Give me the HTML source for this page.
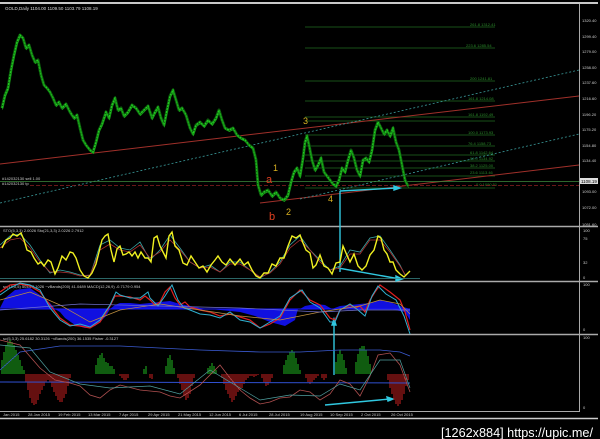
<!DOCTYPE html>
<html><head><meta charset="utf-8"><style>
html,body{margin:0;padding:0;background:#000;width:600px;height:439px;overflow:hidden}
svg{display:block}
text{font-family:"Liberation Sans",sans-serif}
</style></head><body>
<svg width="600" height="439" viewBox="0 0 600 439" xmlns="http://www.w3.org/2000/svg">
<defs>
<polyline id="pr" points="2,108 5,95 8,88 11,70 14,55 17,42 20,35 23,38 26,48 29,45 32,55 35,62 38,60 41,75 44,85 47,88 50,92 53,98 56,105 59,102 62,108 66,104 70,112 74,118 77,115 80,128 83,140 86,145 90,150 93,152 96,142 99,130 102,124 106,112 109,118 112,105 115,98 118,110 121,108 124,116 128,112 132,105 136,108 140,114 144,110 148,106 152,118 155,112 158,107 161,118 164,125 167,110 170,96 173,90 176,100 179,110 182,108 186,115 190,128 193,134 196,125 200,122 204,126 208,120 212,124 216,118 219,110 222,120 225,128 229,130 233,128 237,135 241,138 245,140 249,145 253,148 256,160 258,185 261,195 264,192 268,190 272,196 276,192 280,198 284,200 288,195 291,182 294,172 297,168 300,176 303,158 305,142 307,136 309,145 312,160 315,170 318,165 321,158 324,172 327,176 330,180 333,184 336,186 339,180 342,168 345,172 348,160 351,150 354,158 357,170 360,176 363,160 366,158 369,162 372,150 375,130 378,122 381,128 384,134 387,130 390,136 393,128 396,142 399,150 402,165 405,180 408,186"/>
</defs>
<rect width="600" height="439" fill="#000"/>
<line x1="0" y1="3" x2="598" y2="3" stroke="#c8c8c8" stroke-width="2"/>
<line x1="0" y1="226.5" x2="598" y2="226.5" stroke="#aaa" stroke-width="1.5"/>
<line x1="0" y1="281.5" x2="598" y2="281.5" stroke="#aaa" stroke-width="1.5"/>
<line x1="0" y1="334.5" x2="598" y2="334.5" stroke="#aaa" stroke-width="1.5"/>
<line x1="0" y1="411.5" x2="580" y2="411.5" stroke="#aaa" stroke-width="1"/>
<line x1="0" y1="418.5" x2="598" y2="418.5" stroke="#ccc" stroke-width="1.5"/>
<line x1="579.5" y1="4" x2="579.5" y2="412" stroke="#aaa" stroke-width="1"/>
<text x="5" y="10" fill="#ddd" font-size="4.5">GOLD,Daily  1104.00 1109.50 1103.79 1108.19</text>

<g stroke="#1f6a1f" stroke-width="0.8">
<line x1="305" y1="27" x2="495" y2="27"/><line x1="305" y1="48" x2="495" y2="48"/>
<line x1="305" y1="81" x2="495" y2="81"/><line x1="305" y1="101" x2="495" y2="101"/>
<line x1="305" y1="117" x2="495" y2="117"/><line x1="305" y1="121" x2="495" y2="121"/>
<line x1="305" y1="135" x2="495" y2="135"/><line x1="305" y1="146" x2="495" y2="146"/>
<line x1="305" y1="155" x2="495" y2="155"/><line x1="305" y1="161" x2="495" y2="161"/>
<line x1="305" y1="168" x2="495" y2="168"/><line x1="305" y1="176" x2="495" y2="176"/>
<line x1="305" y1="188" x2="495" y2="188"/>
</g>
<g fill="#2a8a2a" font-size="4">
<text x="470" y="26">261.8 1312.41</text><text x="466" y="47">223.6 1285.54</text>
<text x="470" y="80">200 1241.81</text><text x="468" y="100">161.8 1214.08</text>
<text x="468" y="116">161.8 1192.49</text><text x="468" y="134">100.0 1173.93</text>
<text x="468" y="145">76.4 1158.73</text><text x="470" y="154">61.8 1142.64</text>
<text x="470" y="160">50.0 1134.92</text><text x="470" y="167">38.2 1125.00</text>
<text x="470" y="174">23.6 1113.46</text><text x="476" y="186">0.0 1090.51</text>
</g>
<line x1="0" y1="164" x2="579" y2="96" stroke="#a0302a" stroke-width="1"/>
<line x1="260" y1="203" x2="579" y2="165" stroke="#a0302a" stroke-width="1"/>
<line x1="0" y1="203" x2="579" y2="70" stroke="#3a9a9a" stroke-width="0.8" stroke-dasharray="2,2"/>
<line x1="300" y1="199" x2="579" y2="134" stroke="#3a9a9a" stroke-width="0.8" stroke-dasharray="2,2"/>
<line x1="0" y1="181.5" x2="579" y2="181.5" stroke="#3c8a3c" stroke-width="0.8"/>
<line x1="30" y1="185.5" x2="579" y2="185.5" stroke="#8a2020" stroke-width="0.8" stroke-dasharray="4,2"/>
<text x="2" y="180" fill="#ccc" font-size="4">#142032130 sell 1.00</text>
<text x="2" y="185" fill="#ccc" font-size="4">#142032130 tp</text>
<rect x="580" y="178" width="18" height="6" fill="#ddd"/>
<text x="581" y="183" fill="#000" font-size="4.5">1108.19</text>
<use href="#pr" fill="none" stroke="#0c5c0c" stroke-width="3" stroke-linejoin="round"/>
<use href="#pr" fill="none" stroke="#22d022" stroke-width="1.3" stroke-dasharray="2,1"/>
<use href="#pr" fill="none" stroke="#18a018" stroke-width="0.8" transform="translate(0.5,1.5)"/>
<text x="266" y="183" fill="#e04020" font-size="11">a</text>
<text x="273" y="171" fill="#d8b020" font-size="9">1</text>
<text x="269" y="220" fill="#e04020" font-size="11">b</text>
<text x="286" y="215" fill="#d8b020" font-size="9">2</text>
<text x="303" y="124" fill="#d8b020" font-size="9">3</text>
<text x="328" y="202" fill="#d8b020" font-size="9">4</text>
<g stroke="#30c8e0" stroke-width="1.4" fill="#30c8e0">
<line x1="340" y1="191" x2="397" y2="188"/><polygon points="400,188 394,186 394,190"/>
<line x1="340" y1="191" x2="340" y2="272"/>
<line x1="338" y1="268" x2="400" y2="279"/><polygon points="402,279 396,276 396,281"/>
<line x1="334" y1="375" x2="334" y2="322"/><polygon points="334,319 332,325 336,325"/>
<line x1="325" y1="405" x2="390" y2="399"/><polygon points="393,399 387,397 388,401"/>
</g>
<g fill="#ccc" font-size="4">
<text x="582" y="22">1320.40</text><text x="582" y="38">1299.40</text><text x="582" y="53">1279.00</text>
<text x="582" y="69">1258.00</text><text x="582" y="84">1237.60</text><text x="582" y="100">1216.60</text>
<text x="582" y="116">1196.20</text><text x="582" y="131">1175.20</text><text x="582" y="147">1154.80</text>
<text x="582" y="162">1134.40</text><text x="582" y="193">1093.00</text><text x="582" y="209">1072.00</text>
<text x="582" y="226">1051.60</text>
<text x="583" y="232">100</text><text x="583" y="240">75</text><text x="583" y="264">32</text><text x="583" y="279">0</text>
<text x="583" y="286">100</text><text x="583" y="331">0</text><text x="583" y="339">100</text><text x="583" y="409">0</text>
</g>
<text x="3" y="232" fill="#ccc" font-size="4">STO(5,3,3) 2.0026  Sto(21,3,3) 2.0226 2.7912</text>
<line x1="0" y1="278.5" x2="420" y2="278.5" stroke="#3a8a8a" stroke-width="0.8"/>
<polyline fill="none" stroke="#3aa6a6" stroke-width="0.8" points="0,245 10,236 20,234 30,245 40,260 50,273 60,270 70,272 80,275 90,276 100,245 110,240 120,248 130,250 140,242 150,260 160,250 170,235 180,248 190,262 200,268 210,265 220,272 230,262 240,262 250,270 260,278 270,272 280,262 290,245 300,236 310,250 320,260 330,270 340,266 350,250 360,252 370,238 380,236 390,250 400,265 405,275"/>
<polyline fill="none" stroke="#b03030" stroke-width="0.8" points="0,248 10,240 20,238 30,248 40,262 50,272 60,272 70,273 80,276 90,275 100,250 110,244 120,250 130,252 140,245 150,258 160,252 170,240 180,250 190,262 200,268 210,267 220,272 230,264 240,264 250,270 260,277 270,273 280,264 290,248 300,240 310,250 320,262 330,270 340,268 350,254 360,254 370,240 380,240 390,252 400,266 406,276"/>
<polyline fill="none" stroke="#f0f020" stroke-width="1.4" points="2,248 6,240 10,238 13,234 17,236 21,233 24,240 27,250 31,252 34,258 38,264 41,262 44,266 48,260 51,262 55,274 58,268 62,256 66,260 70,252 73,253 76,258 80,270 84,276 88,278 92,273 96,264 99,252 102,240 105,236 108,234 111,250 114,262 117,249 120,246 123,255 126,254 129,252 132,256 135,252 138,258 141,252 145,258 148,258 151,262 154,238 157,236 160,246 163,252 166,258 169,236 172,232 175,246 179,250 183,263 187,265 191,256 195,262 199,268 203,266 207,272 211,265 215,260 218,256 222,262 226,265 230,259 235,265 240,259 244,265 248,262 252,270 256,276 260,278 264,273 268,273 272,264 276,266 280,258 284,258 288,246 292,236 296,238 300,235 303,243 306,250 310,253 313,268 316,265 320,255 324,266 328,268 332,274 336,263 340,262 343,246 346,253 350,262 354,254 358,266 362,270 366,266 370,255 374,250 378,236 381,238 384,250 387,254 390,262 393,262 396,270 400,274 404,277 407,274 410,271"/>
<text x="3" y="288" fill="#ccc" font-size="4">sc(14,0,5)  5044 3.1026  ~vBands(200) 41.0489  MACD(12,26,9) -0.7179 0.954</text>
<path d="M0,308 L5,298 L15,290 L30,288 L40,295 L50,303 L55,309 L60,312 L65,318 L75,325 L85,328 L95,326 L100,322 L106,316 L110,309 Z" fill="#1010e0"/>
<path d="M110,309 L115,305 L120,303 L130,303 L140,304 L150,303 L160,302 L170,301 L180,304 L190,306 L200,308 L210,309 L220,310 L240,312 L255,316 L270,322 L285,326 L295,320 L298,309 Z" fill="#1010e0"/>
<path d="M300,309 L305,306 L315,304 L325,305 L332,309 L340,306 L350,305 L360,304 L370,303 L380,300 L390,302 L400,306 L410,309 L410,320 L405,312 L390,309 Z" fill="#1010e0"/>
<line x1="0" y1="309" x2="410" y2="309" stroke="#1818ff" stroke-width="1"/>
<polyline fill="none" stroke="#e02020" stroke-width="1.2" points="0,292 10,285 20,284 30,286 40,292 50,305 60,318 70,325 80,326 90,328 100,322 110,306 115,296 120,296 130,297 140,300 145,296 150,300 155,305 160,302 165,292 170,287 175,298 180,305 185,302 190,307 200,310 210,312 220,316 230,314 240,317 250,320 260,328 270,324 280,318 290,300 300,290 310,300 320,305 330,318 335,320 340,310 350,305 355,308 360,306 365,312 370,300 375,292 380,285 390,292 400,300 405,312 410,330"/>
<polyline fill="none" stroke="#30b0d0" stroke-width="1" points="0,295 10,288 20,283 30,285 40,290 50,308 60,320 70,326 80,324 90,327 100,320 110,305 116,292 120,295 130,298 140,298 148,292 150,298 158,306 165,296 172,285 178,300 184,308 190,310 200,314 210,315 220,318 230,312 240,320 250,322 260,328 270,322 280,316 290,298 302,290 310,302 320,308 330,322 335,322 340,310 350,304 358,310 365,316 372,296 378,286 386,294 396,300 404,316 410,334"/>
<polyline fill="none" stroke="#c09040" stroke-width="0.7" points="0,300 30,292 60,305 90,322 120,310 160,304 200,310 240,316 280,320 320,312 360,306 380,300 400,304 410,314"/>
<polyline fill="none" stroke="#7070d0" stroke-width="0.7" points="0,310 80,304 160,306 240,308 320,312 360,310 410,310"/>
<text x="3" y="340" fill="#ccc" font-size="4">sc(5,3,3) 25.6182 30.3126  ~vBands(200) 36.1535  Fisher -0.3127</text>
<g stroke-width="1.2">
<path d="M2,374 V360 M4,374 V352 M6,374 V345 M8,374 V342 M10,374 V340 M12,374 V342 M14,374 V345 M16,374 V350 M18,374 V355 M20,374 V360 M22,374 V366 M24,374 V370 M96,374 V365 M98,374 V358 M100,374 V355 M102,374 V353 M104,374 V358 M106,374 V362 M108,374 V363 M110,374 V366 M112,374 V366 M114,374 V369 M144,374 V369 M146,374 V366 M166,374 V366 M168,374 V358 M170,374 V355 M172,374 V360 M174,374 V368 M208,374 V368 M210,374 V366 M212,374 V363 M214,374 V366 M216,374 V370 M284,374 V365 M286,374 V360 M288,374 V355 M290,374 V352 M292,374 V350 M294,374 V352 M296,374 V358 M298,374 V364 M300,374 V370 M336,374 V362 M338,374 V354 M340,374 V350 M342,374 V354 M344,374 V360 M346,374 V368 M356,374 V362 M358,374 V354 M360,374 V348 M362,374 V346 M364,374 V346 M366,374 V350 M368,374 V356 M370,374 V364" stroke="#1a9a1a"/>
<path d="M26,374 V382 M28,374 V390 M30,374 V398 M32,374 V403 M34,374 V405 M36,374 V404 M38,374 V400 M40,374 V394 M42,374 V390 M44,374 V386 M46,374 V382 M48,374 V380 M50,374 V382 M52,374 V387 M54,374 V392 M56,374 V396 M58,374 V400 M60,374 V402 M62,374 V402 M64,374 V398 M66,374 V394 M68,374 V386 M70,374 V378 M120,374 V376 M122,374 V378 M124,374 V380 M126,374 V380 M128,374 V378 M150,374 V378 M152,374 V379 M178,374 V378 M180,374 V384 M182,374 V390 M184,374 V396 M186,374 V400 M188,374 V398 M190,374 V394 M192,374 V386 M194,374 V378 M222,374 V378 M224,374 V384 M226,374 V390 M228,374 V394 M230,374 V398 M232,374 V402 M234,374 V400 M236,374 V396 M238,374 V392 M240,374 V390 M242,374 V388 M244,374 V384 M246,374 V380 M248,374 V378 M250,374 V376 M252,374 V376 M254,374 V377 M256,374 V376 M258,374 V375 M262,374 V378 M264,374 V382 M266,374 V386 M268,374 V385 M270,374 V382 M272,374 V378 M306,374 V378 M308,374 V382 M310,374 V384 M312,374 V382 M314,374 V380 M316,374 V378 M318,374 V376 M322,374 V378 M324,374 V380 M326,374 V378 M388,374 V380 M390,374 V388 M392,374 V394 M394,374 V400 M396,374 V404 M398,374 V406 M400,374 V404 M402,374 V400 M404,374 V394 M406,374 V386 M408,374 V380" stroke="#a81c1c"/>
</g>
<line x1="0" y1="382" x2="410" y2="383" stroke="#3050d0" stroke-width="1"/>
<polyline fill="none" stroke="#3a5ad0" stroke-width="0.8" points="0,370 20,352 60,346 120,346 200,350 260,352 300,352 340,350 380,350 400,352 410,356"/>
<polyline fill="none" stroke="#b05050" stroke-width="0.8" points="0,340 20,345 40,368 55,380 70,383 80,386 90,395 100,398 110,390 120,385 140,390 160,392 170,396 180,398 200,385 220,365 230,378 240,390 250,398 260,404 270,402 280,398 290,397 300,390 310,392 320,400 330,394 340,380 350,384 360,396 370,376 378,355 390,353 400,365 410,392"/>
<polyline fill="none" stroke="#50a0a0" stroke-width="0.7" points="0,345 30,348 50,372 80,384 110,388 150,386 180,394 210,370 230,382 260,400 290,395 320,396 340,384 360,390 380,360 400,360 410,388"/>
<g fill="#ccc" font-size="4">
<text x="3" y="416">Jan 2015</text><text x="28" y="416">28 Jan 2015</text><text x="58" y="416">19 Feb 2015</text>
<text x="88" y="416">13 Mar 2015</text><text x="119" y="416">7 Apr 2015</text><text x="148" y="416">29 Apr 2015</text>
<text x="178" y="416">21 May 2015</text><text x="209" y="416">12 Jun 2015</text><text x="239" y="416">6 Jul 2015</text>
<text x="269" y="416">28 Jul 2015</text><text x="300" y="416">19 Aug 2015</text><text x="330" y="416">10 Sep 2015</text>
<text x="361" y="416">2 Oct 2015</text><text x="391" y="416">26 Oct 2015</text>
</g>
<text x="441" y="437" fill="#fff" font-size="13" font-family="Liberation Mono, monospace" textLength="152" lengthAdjust="spacingAndGlyphs">[1262x884] https://upic.me/</text>
</svg>
</body></html>
